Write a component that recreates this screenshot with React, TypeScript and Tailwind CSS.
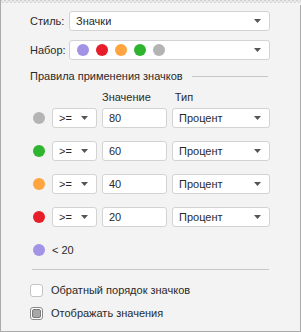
const dots: Record<string, string> = {
  purple: 'bg-[#a293e6]',
  red: 'bg-[#e71d2a]',
  orange: 'bg-[#ffa43f]',
  green: 'bg-[#2fb42f]',
  gray: 'bg-[#b4b4b4]',
}

function Dot({ color }: { color: string }) {
  return <span className={`block w-[12px] h-[12px] rounded-full ${dots[color]}`} />
}

function Arrow() {
  return (
    <svg width="7" height="4" viewBox="0 0 7 4" className="shrink-0">
      <path d="M0 0h7L3.5 4z" fill="#555" />
    </svg>
  )
}

function Select({ className, children }: { className: string; children: React.ReactNode }) {
  return (
    <div
      className={`flex items-center h-[20px] bg-white border border-[#d3d3d3] rounded-[3px] pl-[6px] pr-[8px] ${className}`}
    >
      <div className="flex-1 flex items-center">{children}</div>
      <Arrow />
    </div>
  )
}

const rules = [
  { color: 'gray', value: '80' },
  { color: 'green', value: '60' },
  { color: 'orange', value: '40' },
  { color: 'red', value: '20' },
]

export default function App() {
  return (
    <div
      className="relative w-[301px] h-[332px] bg-[#f3f3f3] border-l border-r border-b border-[#ababab] text-[11px] text-[#2a2a2a]"
      style={{ fontFamily: '"Liberation Sans", Arial, sans-serif' }}
    >
      <svg className="absolute left-0 top-0" width="301" height="5" viewBox="0 0 301 5">
        <rect width="301" height="5" fill="#f3f3f3" />
        <path
          d={
            'M0 0 ' +
            Array.from({ length: 76 })
              .map((_, i) => `L${i * 4 + 2} 3 L${i * 4 + 4} 0`)
              .join(' ') +
            ' Z'
          }
          fill="#ffffff"
          stroke="#c8c8c8"
          strokeWidth="0.8"
        />
      </svg>

      <div className="flex flex-col pl-[29px] pt-[11px]">
        <div className="flex items-center h-[20px]">
          <span className="w-[39px]">Стиль:</span>
          <Select className="w-[201px]">
            <span>Значки</span>
          </Select>
        </div>

        <div className="flex items-center h-[20px] mt-[9px]">
          <span className="w-[39px]">Набор:</span>
          <Select className="w-[201px]">
            <div className="flex items-center gap-[7px] pl-[1px]">
              <Dot color="purple" />
              <Dot color="red" />
              <Dot color="orange" />
              <Dot color="green" />
              <Dot color="gray" />
            </div>
          </Select>
        </div>

        <div className="flex items-center mt-[9px] h-[14px] pr-[32px]">
          <span>Правила применения значков</span>
          <div className="flex-1 h-px bg-[#c6c6c6] ml-[9px]" />
        </div>

        <div className="flex items-center mt-[7px] h-[14px]">
          <span className="ml-[72px]">Значение</span>
          <span className="ml-[24px]">Тип</span>
        </div>

        <div className="flex flex-col gap-[13px] mt-[4px]">
          {rules.map((r) => (
            <div key={r.value} className="flex items-center h-[20px]">
              <div className="w-[22px] pl-[3px]">
                <Dot color={r.color} />
              </div>
              <Select className="w-[45px]">
                <span>&gt;=</span>
              </Select>
              <div className="w-[65px] h-[20px] ml-[5px] bg-white border border-[#d3d3d3] rounded-[3px] pl-[6px] flex items-center">
                {r.value}
              </div>
              <Select className="w-[98px] ml-[5px]">
                <span>Процент</span>
              </Select>
            </div>
          ))}
        </div>

        <div className="flex items-center h-[14px] mt-[16px]">
          <div className="w-[22px] pl-[3px]">
            <Dot color="purple" />
          </div>
          <span>&lt; 20</span>
        </div>

        <div className="h-px bg-[#c6c6c6] w-[237px] ml-[2px] mt-[12px]" />

        <div className="flex items-center h-[14px] mt-[13px]">
          <span className="w-[13px] h-[13px] rounded-[3px] border border-[#c4c4c4] bg-white" />
          <span className="ml-[8px]">Обратный порядок значков</span>
        </div>

        <div className="flex items-center h-[14px] mt-[9px]">
          <span className="w-[13px] h-[13px] rounded-[3px] border border-[#8a8a8a] bg-white flex items-center justify-center">
            <span className="w-[9px] h-[9px] rounded-[2px] bg-[#a8a8a8] border border-[#7a7a7a]" />
          </span>
          <span className="ml-[8px]">Отображать значения</span>
        </div>
      </div>
    </div>
  )
}
